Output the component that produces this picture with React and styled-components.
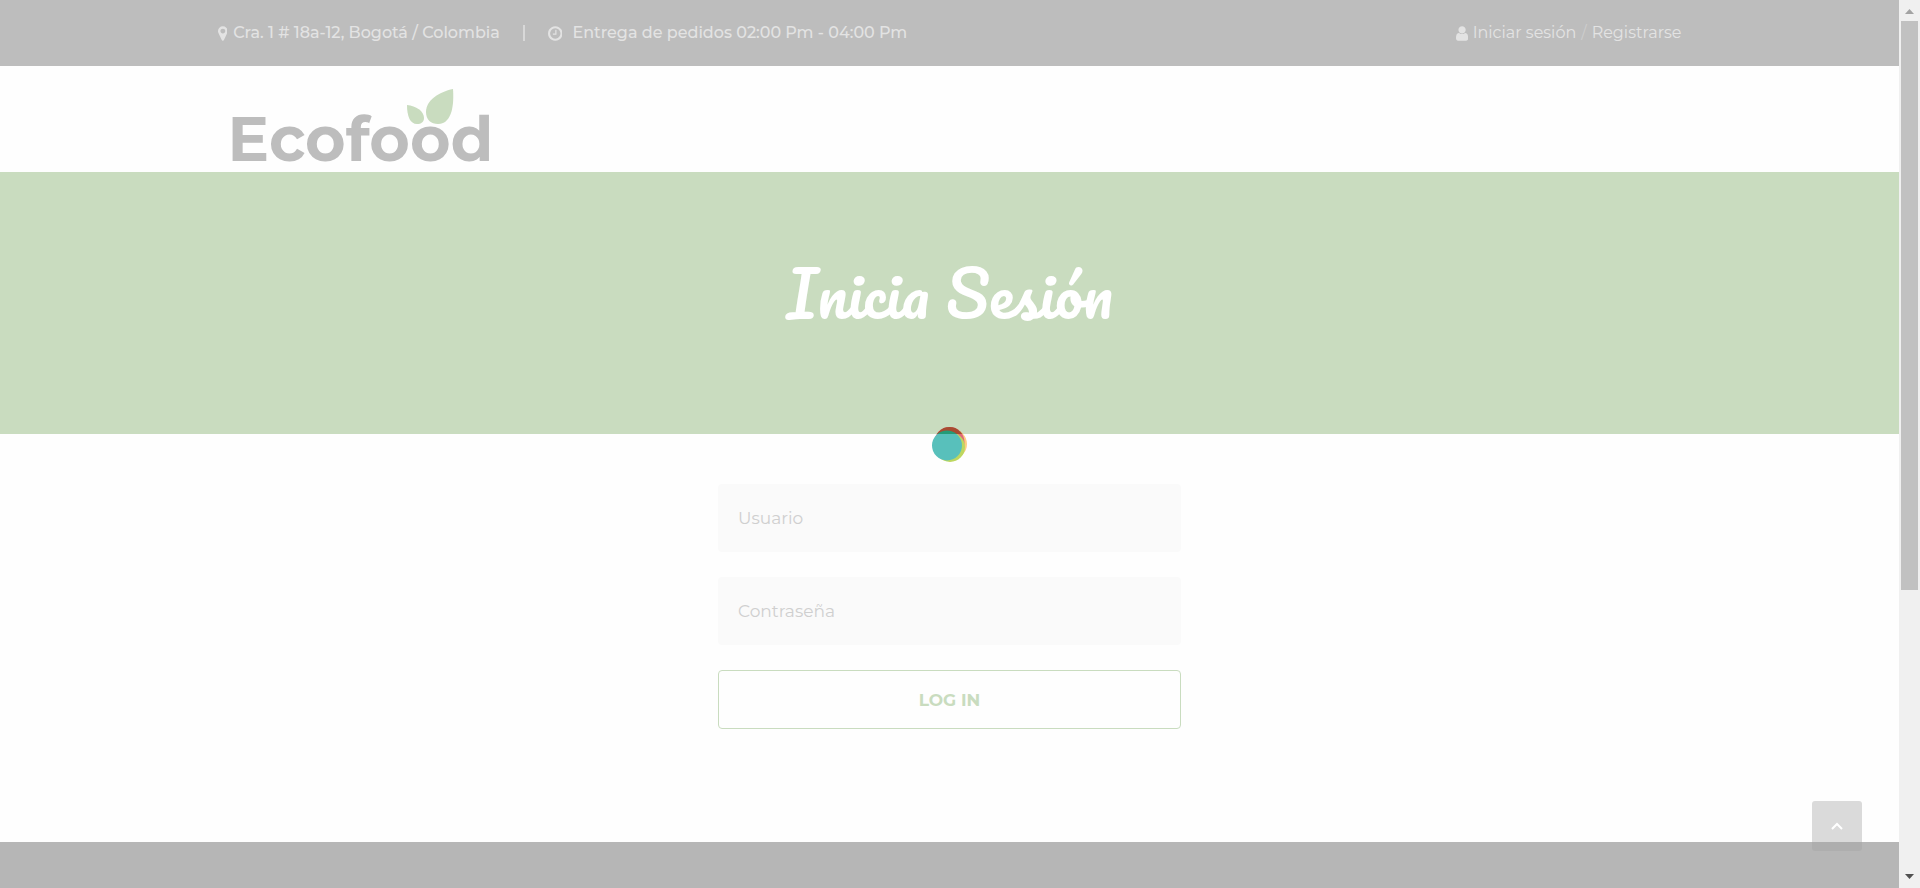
import React from "react";
import styled, { createGlobalStyle } from "styled-components";

const GlobalStyle = createGlobalStyle`
  *, *::before, *::after { box-sizing: border-box; }
  body {
    margin: 0;
    background: #fefefe;
    color: #bdbdbd;
    font-family: Montserrat, Inter, sans-serif;
    font-size: 17px;
    line-height: 24px;
  }
  a { color: inherit; text-decoration: none; }
`;

const Shell = styled.div`
  display: flex;
  align-items: flex-start;
`;

const Page = styled.div`
  display: flex;
  flex: 1;
  flex-direction: column;
  min-width: 0;
  min-height: 100vh;
`;

const Container = styled.div`
  display: flex;
  align-items: center;
  justify-content: space-between;
  width: 100%;
  max-width: 1512px;
  margin: 0 auto;
  padding: 0 24px;
`;

const TopBar = styled.div`
  display: flex;
  min-height: 66px;
  background: #bdbdbd;
  color: #e3e3e3;
  font-size: 16px;
`;

const TopGroup = styled.div`
  display: flex;
  align-items: center;
  gap: ${({ $gap }) => $gap}px;
`;

const Info = styled.span`
  font-weight: 500;
`;

const Divider = styled.span`
  width: 2px;
  height: 16px;
  background: #d8d8d8;
`;

const Slash = styled.span`
  color: #cdcdcd;
`;

const Glyph = styled.svg`
  display: block;
  height: 17px;
  fill: currentColor;
`;

const Header = styled.header`
  display: flex;
  min-height: 106px;
`;

const Logo = styled.a`
  position: relative;
  margin: 40px 10px 0;
  color: #bdbdbd;
  font-family: Montserrat, Lato, sans-serif;
  font-size: 62px;
  font-weight: 700;
  line-height: 64px;
`;

const Leaves = styled.svg`
  position: absolute;
  top: -19px;
  left: 179px;
  width: 48px;
  height: 38px;
  fill: #c9dcbf;
`;

const Banner = styled.section`
  display: flex;
  align-items: center;
  justify-content: center;
  min-height: 262px;
  padding-bottom: 20px;
  background: #c9dcbf;
`;

const Title = styled.h1`
  margin: 0;
  color: #ffffff;
  font-family: Pacifico, cursive;
  font-size: 62px;
  font-weight: 400;
  line-height: 80px;
`;

const Main = styled.main`
  padding: 50px 24px 113px;
`;

const LoginForm = styled.form`
  display: flex;
  flex-direction: column;
  gap: 25px;
  width: 100%;
  max-width: 463px;
  margin: 0 auto;
`;

const Field = styled.input`
  width: 100%;
  height: 68px;
  padding: 0 20px;
  border: 0;
  border-radius: 4px;
  background: #fafafa;
  color: #999999;
  font: inherit;
  &::placeholder { color: #cfcfcf; opacity: 1; }
`;

const Submit = styled.button`
  height: 59px;
  border: 1px solid #c9dcbf;
  border-radius: 4px;
  background: transparent;
  color: #c9dcbf;
  font: inherit;
  font-weight: 700;
`;

const Footer = styled.footer`
  flex: 1;
  min-height: 46px;
  background: #b6b6b6;
`;

const BackToTop = styled.button`
  position: fixed;
  right: 58px;
  bottom: 37px;
  display: flex;
  align-items: center;
  justify-content: center;
  width: 50px;
  height: 50px;
  padding: 0;
  border: 0;
  border-radius: 3px;
  background: rgba(162, 162, 162, 0.39);
`;

const Preloader = styled.div`
  position: fixed;
  inset: 0 21px 0 0;
  display: flex;
  align-items: center;
  justify-content: center;
  pointer-events: none;
`;

const ScrollTrack = styled.div`
  position: sticky;
  top: 0;
  display: flex;
  flex-direction: column;
  align-items: center;
  width: 21px;
  height: 100vh;
  background: #f0f0f0;
`;

const ScrollArrow = styled.svg`
  display: block;
  flex: none;
  width: 21px;
  height: 21px;
`;

const ScrollTravel = styled.div`
  flex: 1;
  width: 17px;
`;

const ScrollThumb = styled.div`
  height: 67.3%;
  background: #c1c1c1;
`;

const PinIcon = () => (
  <Glyph viewBox="0 0 1024 1792" aria-hidden="true">
    <path d="M768 640q0-106-75-181t-181-75-181 75-75 181 75 181 181 75 181-75 75-181zM1024 640q0 109-33 179l-364 774q-16 33-47.5 52t-67.5 19-67.5-19-46.5-52l-365-774q-33-70-33-179 0-212 150-362t362-150 362 150 150 362z" />
  </Glyph>
);

const ClockIcon = () => (
  <Glyph viewBox="0 0 1536 1792" aria-hidden="true">
    <path d="M896 544v448q0 14-9 23t-23 9h-320q-14 0-23-9t-9-23v-64q0-14 9-23t23-9h224v-352q0-14 9-23t23-9h64q14 0 23 9t9 23zM1312 896q0-148-73-273t-198-198-273-73-273 73-198 198-73 273 73 273 198 198 273 73 273-73 198-198 73-273zM1536 896q0 209-103 385.500t-279.500 279.500-385.500 103-385.500-103-279.500-279.500-103-385.500 103-385.500 279.500-279.500 385.500-103 385.500 103 279.500 279.500 103 385.500z" />
  </Glyph>
);

const UserIcon = () => (
  <Glyph viewBox="0 0 1280 1792" aria-hidden="true">
    <path d="M1280 1399q0 109-62.500 187t-150.500 78h-854q-88 0-150.500-78t-62.500-187q0-85 8.500-160.500t31.500-152 58.500-131 94-89 134.500-34.500q131 128 313 128t313-128q76 0 134.500 34.500t94 89 58.500 131 31.500 152 8.500 160.500zM1024 512q0 159-112.500 271.500t-271.500 112.500-271.500-112.500-112.500-271.500 112.500-271.500 271.500-112.500 271.500 112.500 112.500 271.500z" />
  </Glyph>
);

const Spinner = () => (
  <svg width="60" height="60" viewBox="0 0 60 60" aria-hidden="true">
    <defs>
      <clipPath id="overBanner"><rect width="60" height="20" /></clipPath>
    </defs>
    <circle cx="32" cy="30" r="15" fill="#fdce83" />
    <circle cx="29.500" cy="28" r="15" fill="#e0687a" />
    <circle cx="30" cy="33" r="15" fill="#bdd75f" />
    <circle cx="27" cy="31.500" r="15" fill="#58c0bb" />
    <g clipPath="url(#overBanner)">
      <circle cx="32" cy="30" r="15" fill="#d9b56c" />
      <circle cx="29.500" cy="28" r="15" fill="#a74b31" />
      <circle cx="27" cy="31.500" r="15" fill="#249b77" />
    </g>
  </svg>
);

export default function App() {
  return (
    <>
      <GlobalStyle />
      <Shell>
        <Page>
          <TopBar>
            <Container>
              <TopGroup $gap={23}>
                <TopGroup $gap={6}>
                  <PinIcon />
                  <Info>Cra. 1 # 18a-12, Bogotá / Colombia</Info>
                </TopGroup>
                <Divider />
                <TopGroup $gap={10}>
                  <ClockIcon />
                  <Info>Entrega de pedidos 02:00 Pm - 04:00 Pm</Info>
                </TopGroup>
              </TopGroup>
              <TopGroup $gap={5}>
                <UserIcon />
                <a href="#iniciar">Iniciar sesión</a>
                <Slash>/</Slash>
                <a href="#registrarse">Registrarse</a>
              </TopGroup>
            </Container>
          </TopBar>
          <Header>
            <Container>
              <Logo href="#inicio">
                Ecofood
                <Leaves viewBox="0 0 48 38" aria-hidden="true">
                  <path d="M0 17C9 18 17 23 17 30C17 34 14 36 10 36C3 36 0 28 0 17Z" />
                  <path d="M46 1C47 14 46 36 31 36C24 36 19 32 19 24C19 12 32 4 46 1Z" />
                </Leaves>
              </Logo>
            </Container>
          </Header>
          <Banner>
            <Title>Inicia Sesión</Title>
          </Banner>
          <Main>
            <LoginForm onSubmit={(event) => event.preventDefault()}>
              <Field type="text" name="usuario" placeholder="Usuario" aria-label="Usuario" />
              <Field type="password" name="contrasena" placeholder="Contraseña" aria-label="Contraseña" />
              <Submit type="submit">LOG IN</Submit>
            </LoginForm>
          </Main>
          <Footer />
        </Page>
        <ScrollTrack aria-hidden="true">
          <ScrollArrow viewBox="0 0 21 21"><path d="M6 14L10.500 9L15 14Z" fill="#a3a3a3" /></ScrollArrow>
          <ScrollTravel><ScrollThumb /></ScrollTravel>
          <ScrollArrow viewBox="0 0 21 21"><path d="M6 7L10.500 12L15 7Z" fill="#505050" /></ScrollArrow>
        </ScrollTrack>
      </Shell>
      <BackToTop type="button" aria-label="Volver arriba">
        <svg width="12" height="8" viewBox="0 0 12 8" fill="none" stroke="#ffffff" strokeWidth="2">
          <path d="M1 7L6 2L11 7" />
        </svg>
      </BackToTop>
      <Preloader><Spinner /></Preloader>
    </>
  );
}
